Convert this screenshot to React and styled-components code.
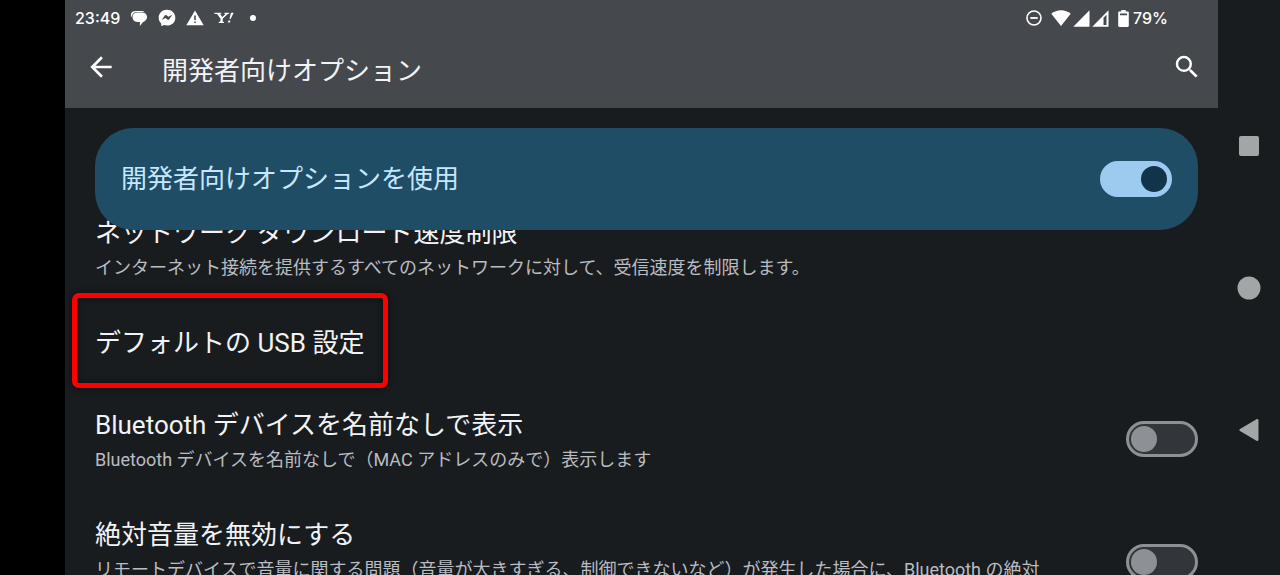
import { useState } from 'react';
import styled, { createGlobalStyle } from 'styled-components';
import { MdArrowBack, MdSearch } from 'react-icons/md';

const Colors = {
  black: '#000000',
  surface: '#191c1f',
  header: '#45484d',
  banner: '#204d66',
  bannerText: '#c5e7ff',
  title: '#f1f3f6',
  summary: '#b9bcc1',
  accent: '#9dcbef',
  accentDark: '#12344a',
  outline: '#8d9195',
  track: '#32363b',
  nav: '#a3a6a7',
  highlight: '#ff0000',
};

const GlobalStyle = createGlobalStyle`
  * {
    box-sizing: border-box;
  }

  body {
    margin: 0;
    overflow: hidden;
    background: ${Colors.black};
    font-family: 'Roboto', 'Noto Sans CJK JP', sans-serif;
  }
`;

const Device = styled.div`
  display: flex;
  height: 100vh;
  padding-left: 65px;
  overflow: hidden;
`;

const Screen = styled.main`
  flex: 1;
  min-width: 0;
  overflow: hidden;
  background: ${Colors.surface};
`;

const Header = styled.header`
  height: 108px;
  background: ${Colors.header};
  color: #ffffff;
`;

const StatusBar = styled.div`
  display: flex;
  align-items: center;
  justify-content: space-between;
  height: 36px;
  padding: 0 50px 0 10px;
  font-family: 'Inter', sans-serif;
  font-size: 16px;
  font-weight: 500;
  line-height: 36px;
`;

const StatusGroup = styled.div`
  display: flex;
  align-items: center;
  gap: ${({ $gap }) => $gap}px;

  svg {
    display: block;
    fill: currentColor;
  }
`;

const Toolbar = styled.div`
  display: flex;
  align-items: flex-end;
  height: 47px;
  padding: 0 15px 0 20px;
`;

const IconButton = styled.button`
  display: flex;
  align-items: center;
  justify-content: center;
  width: 32px;
  height: 32px;
  padding: 0;
  border: 0;
  background: none;
  color: inherit;
`;

const PageTitle = styled.h1`
  flex: 1;
  margin: 0 0 0 45px;
  font-size: 26px;
  font-weight: 400;
  line-height: 24px;
  color: ${Colors.title};
`;

const BannerArea = styled.div`
  position: relative;
  z-index: 1;
  padding: 20px 20px 0 30px;
`;

const Banner = styled.div`
  display: flex;
  align-items: center;
  justify-content: space-between;
  height: 102px;
  padding: 0 26px;
  border-radius: 38px;
  background: ${Colors.banner};
  color: ${Colors.bannerText};
  font-size: 26px;
  line-height: 40px;
`;

const Switch = styled.input.attrs({ type: 'checkbox', role: 'switch' })`
  flex: none;
  display: flex;
  align-items: center;
  justify-content: flex-start;
  appearance: none;
  width: 72px;
  height: 36px;
  margin: 0;
  padding: 0 2px;
  border: 3px solid ${Colors.outline};
  border-radius: 18px;
  background: ${Colors.track};

  &::before {
    content: '';
    width: 26px;
    height: 26px;
    border-radius: 50%;
    background: ${Colors.outline};
  }

  &:checked {
    justify-content: flex-end;
    border-color: ${Colors.accent};
    background: ${Colors.accent};
  }

  &:checked::before {
    background: ${Colors.accentDark};
  }
`;

const List = styled.ul`
  margin: -38px 0 0;
  padding: 0 20px 0 30px;
  list-style: none;
`;

const Row = styled.li`
  display: flex;
  align-items: center;
  justify-content: space-between;
  gap: 70px;
  padding: 21px 0;
`;

const RowTitle = styled.label`
  position: relative;
  display: block;
  width: fit-content;
  font-size: 26px;
  line-height: 40px;
  color: ${Colors.title};
`;

const Summary = styled.p`
  margin: 2px 0 0;
  font-size: 18px;
  line-height: 26px;
  color: ${Colors.summary};
`;

const Highlight = styled.span`
  position: absolute;
  inset: -30px -24px -25px -23px;
  border: 5px solid ${Colors.highlight};
  border-radius: 7px;
  box-shadow:
    0 0 6px rgba(0, 0, 0, 0.6),
    inset 0 0 6px rgba(0, 0, 0, 0.6);
  pointer-events: none;
`;

const NavBar = styled.nav`
  display: flex;
  flex-direction: column;
  align-items: center;
  justify-content: center;
  gap: 110px;
  width: 62px;
  background: ${Colors.surface};
  color: ${Colors.nav};

  svg {
    fill: currentColor;
  }
`;

const ChatIcon = () => (
  <svg width="18" height="18" viewBox="0 0 18 18" aria-hidden="true">
    <path d="M5.500 2h6c1.200 0 2.300.3 3.200.9H6.800C3.600 2.900 2 4.900 1.900 8.200 1.200 7.400.9 6.500.9 5.700.9 3.500 2.900 2 5.500 2z" />
    <path d="M7.300 3.500h5c2.900 0 4.700 1.800 4.700 4.500 0 2.500-1.600 4.200-3.900 4.900l-3.200 4.100v-4H7.300c-2.900 0-4.800-2.200-4.800-4.900s1.900-4.600 4.800-4.600z" />
  </svg>
);

const MessengerIcon = () => (
  <svg width="18" height="18" viewBox="0 0 18 18" aria-hidden="true">
    <path
      fillRule="evenodd"
      d="M9 .7C4.200.7.700 4.200.700 8.700c0 2.400 1 4.400 2.600 5.800v2.800l2.600-1.200c1 .3 2 .5 3.100.5 4.800 0 8.300-3.400 8.300-7.900S13.800.7 9 .7zM3.800 11.100l2.900-4.500c.4-.6 1.200-.8 1.800-.3l2 1.500 3.700-2.100-2.900 4.600c-.4.6-1.200.7-1.800.3l-2-1.500z"
    />
  </svg>
);

const WarningIcon = () => (
  <svg width="18" height="18" viewBox="0 0 18 18" aria-hidden="true">
    <path
      fillRule="evenodd"
      d="M9 1.500 17.700 16.300H.3zM8.200 6.500v4.600h1.600V6.500zm0 6v1.600h1.600v-1.600z"
    />
  </svg>
);

const YahooIcon = () => (
  <svg width="20" height="14" viewBox="0 0 20 14" aria-hidden="true">
    <path d="M.3 1.800h7v1H6l2.300 3.200 3.300-2.900-1.200-.4v-.9h4.700v1l-1.300.3-4.900 4.500-.3 2.900 1.400.4v1H4.700v-1l1.600-.4.3-2.800L3 3 .3 2.800z" />
    <path d="M16.900 1.800h2.800l-3.100 6.200h-1.100zM14.500 9.400h2l-.7 2.200h-2z" />
  </svg>
);

const MoreIcon = () => (
  <svg width="18" height="6" viewBox="0 0 18 6" aria-hidden="true">
    <circle cx="9" cy="3" r="3" />
  </svg>
);

const DndIcon = () => (
  <svg width="16" height="16" viewBox="0 0 16 16" aria-hidden="true">
    <circle cx="8" cy="8" r="7" fill="none" stroke="currentColor" strokeWidth="1.600" />
    <path d="M4.300 7.100h7.400v1.800H4.300z" />
  </svg>
);

const WifiIcon = () => (
  <svg width="20" height="16" viewBox="0 0 20 16" aria-hidden="true">
    <path d="M10 16 .3 3.800C3 1.500 6.300.2 10 .2s7 1.300 9.700 3.600z" />
  </svg>
);

const SignalIcon = ({ partial }) => (
  <svg width="17" height="17" viewBox="0 0 17 17" aria-hidden="true">
    <path fillRule="evenodd" d={`M16.500.3v16.400H.3z${partial ? 'M11.500 7.700v7.400h3V4.700z' : ''}`} />
  </svg>
);

const BatteryIcon = () => (
  <svg width="11" height="17" viewBox="0 0 11 17" aria-hidden="true">
    <path
      fillRule="evenodd"
      d="M3.300 0h4.400v1.600h1.900c.700 0 1.200.5 1.200 1.200v12.900c0 .7-.5 1.200-1.200 1.200H1.400c-.7 0-1.200-.5-1.200-1.200V2.800c0-.7.5-1.200 1.200-1.200h1.900zM2 3.400v1.900h7V3.400z"
    />
  </svg>
);

const rows = [
  {
    id: 'download-rate',
    title: 'ネットワーク ダウンロード速度制限',
    summary:
      'インターネット接続を提供するすべてのネットワークに対して、受信速度を制限します。',
  },
  {
    id: 'usb',
    title: 'デフォルトの USB 設定',
    highlighted: true,
  },
  {
    id: 'bt-unnamed',
    title: 'Bluetooth デバイスを名前なしで表示',
    summary: 'Bluetooth デバイスを名前なしで（MAC アドレスのみで）表示します',
    toggle: true,
  },
  {
    id: 'abs-volume',
    title: '絶対音量を無効にする',
    summary:
      'リモートデバイスで音量に関する問題（音量が大きすぎる、制御できないなど）が発生した場合に、Bluetooth の絶対音量機能を無効にします。',
    toggle: true,
  },
];

const SettingRow = ({ id, title, summary, toggle, highlighted }) => (
  <Row>
    <div>
      <RowTitle as={toggle ? 'label' : 'div'} htmlFor={toggle ? id : undefined}>
        {title}
        {highlighted && <Highlight />}
      </RowTitle>
      {summary && <Summary>{summary}</Summary>}
    </div>
    {toggle && <Switch id={id} />}
  </Row>
);

const App = () => {
  const [enabled, setEnabled] = useState(true);

  return (
    <>
      <GlobalStyle />
      <Device lang="ja">
        <Screen>
          <Header>
            <StatusBar>
              <StatusGroup $gap={10}>
                <span>23:49</span>
                <ChatIcon />
                <MessengerIcon />
                <WarningIcon />
                <YahooIcon />
                <MoreIcon />
              </StatusGroup>
              <StatusGroup $gap={9}>
                <DndIcon />
                <StatusGroup $gap={2}>
                  <WifiIcon />
                  <SignalIcon />
                  <SignalIcon partial />
                </StatusGroup>
                <StatusGroup $gap={4}>
                  <BatteryIcon />
                  <span>79%</span>
                </StatusGroup>
              </StatusGroup>
            </StatusBar>
            <Toolbar>
              <IconButton type="button" aria-label="戻る">
                <MdArrowBack size={32} />
              </IconButton>
              <PageTitle>開発者向けオプション</PageTitle>
              <IconButton type="button" aria-label="検索">
                <MdSearch size={30} />
              </IconButton>
            </Toolbar>
          </Header>
          <BannerArea>
            <Banner>
              <label htmlFor="dev-options">開発者向けオプションを使用</label>
              <Switch
                id="dev-options"
                checked={enabled}
                onChange={(e) => setEnabled(e.target.checked)}
              />
            </Banner>
          </BannerArea>
          <List>
            {rows.map((row) => (
              <SettingRow key={row.id} {...row} />
            ))}
          </List>
        </Screen>
        <NavBar>
          <IconButton type="button" aria-label="最近使ったアプリ">
            <svg width="20" height="20" viewBox="0 0 20 20">
              <rect width="20" height="20" rx="2" />
            </svg>
          </IconButton>
          <IconButton type="button" aria-label="ホーム">
            <svg width="24" height="24" viewBox="0 0 24 24">
              <circle cx="12" cy="12" r="11.500" />
            </svg>
          </IconButton>
          <IconButton type="button" aria-label="戻る">
            <svg width="20" height="22" viewBox="0 0 20 22">
              <path d="M17 .4 1 9.900c-.9.600-.9 1.600 0 2.200l16 9.500c1.200.7 2.500.2 2.500-1.200V1.600C19.500.2 18.200-.3 17 .4z" />
            </svg>
          </IconButton>
        </NavBar>
      </Device>
    </>
  );
};

export default App;
